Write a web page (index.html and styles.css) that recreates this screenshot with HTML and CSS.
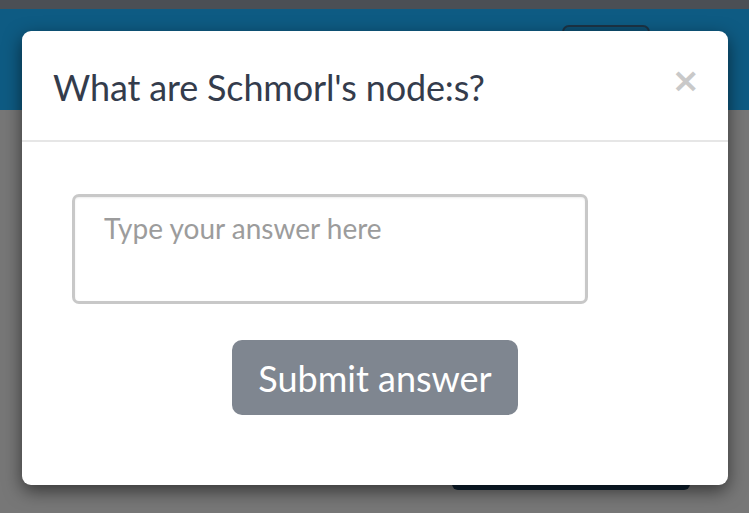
FILE: index.html
```html
<!DOCTYPE html>
<html lang="en">
<head>
<meta charset="utf-8">
<title>Question</title>
<link rel="stylesheet" href="styles.css">
</head>
<body>
<div class="page">
  <div class="topbar"></div>
  <nav class="navbar">
    <span class="nav-btn"></span>
  </nav>
  <main class="main">
    <div class="dark-block"></div>
  </main>
</div>

<div class="modal" role="dialog">
  <header class="modal-header">
    <h2 class="modal-title">What are Schmorl's node:s?</h2>
    <button class="close" type="button" aria-label="Close">&times;</button>
  </header>
  <div class="modal-body">
    <textarea class="answer" placeholder="Type your answer here"></textarea>
    <div class="actions">
      <button class="submit" type="button">Submit answer</button>
    </div>
  </div>
</div>
</body>
</html>
```

FILE: styles.css
```css
html, body {
  margin: 0;
  padding: 0;
  height: 100%;
  overflow: hidden;
  font-family: Lato, "Open Sans", "Liberation Sans", sans-serif;
}

.page {
  height: 100%;
  background: #777777;
  display: flex;
  flex-direction: column;
}

.topbar {
  height: 9px;
  background: #4b4f55;
}

.navbar {
  height: 101px;
  background: #0e5b83;
  display: flex;
  justify-content: flex-end;
  align-items: flex-start;
  padding: 16px 99px 0 0;
  box-sizing: border-box;
}

.nav-btn {
  width: 88px;
  height: 40px;
  box-sizing: border-box;
  border: 2px solid #1c3345;
  border-radius: 7px;
  background: #0d4f72;
}

.main {
  flex: 1;
  display: flex;
  justify-content: flex-end;
  padding: 330px 59px 0 0;
}

.dark-block {
  width: 238px;
  height: 50px;
  border-radius: 6px;
  background: #0f2232;
}

.modal {
  position: absolute;
  left: 22px;
  top: 31px;
  width: 706px;
  height: 454px;
  background: #ffffff;
  border-radius: 9px;
  box-shadow: 0 6px 18px rgba(0, 0, 0, 0.55);
  display: flex;
  flex-direction: column;
}

.modal-header {
  height: 111px;
  box-sizing: border-box;
  border-bottom: 2px solid #e6e6e6;
  display: flex;
  align-items: center;
  justify-content: space-between;
  padding: 0 28px 0 31px;
}

.modal-title {
  margin: 0;
  font-weight: 400;
  font-size: 36px;
  color: #343c4c;
  letter-spacing: -0.15px;
  padding-top: 2px;
}

.close {
  border: 0;
  background: none;
  padding: 0;
  margin: 0 0 12px;
  font-family: "DejaVu Sans", sans-serif;
  font-size: 34px;
  line-height: 1;
  font-weight: 700;
  color: #c9c9c9;
  cursor: pointer;
}

.modal-body {
  padding: 52px 50px 0;
}

.answer {
  display: block;
  width: 516px;
  height: 110px;
  box-sizing: border-box;
  border: 3px solid #c8c8c8;
  border-radius: 7px;
  padding: 14px 29px;
  font-family: Lato, "Open Sans", "Liberation Sans", sans-serif;
  font-size: 28px;
  color: #333;
  resize: none;
  outline: none;
  box-shadow: inset 0 1px 2px rgba(0, 0, 0, 0.08);
}

.answer::placeholder {
  color: #9c9c9c;
}

.actions {
  display: flex;
  justify-content: center;
  padding-top: 36px;
}

.submit {
  width: 286px;
  height: 75px;
  border: 0;
  border-radius: 10px;
  background: #7f8690;
  color: #ffffff;
  font-family: Lato, "Open Sans", "Liberation Sans", sans-serif;
  font-size: 36px;
  cursor: pointer;
  padding: 0;
}
```
